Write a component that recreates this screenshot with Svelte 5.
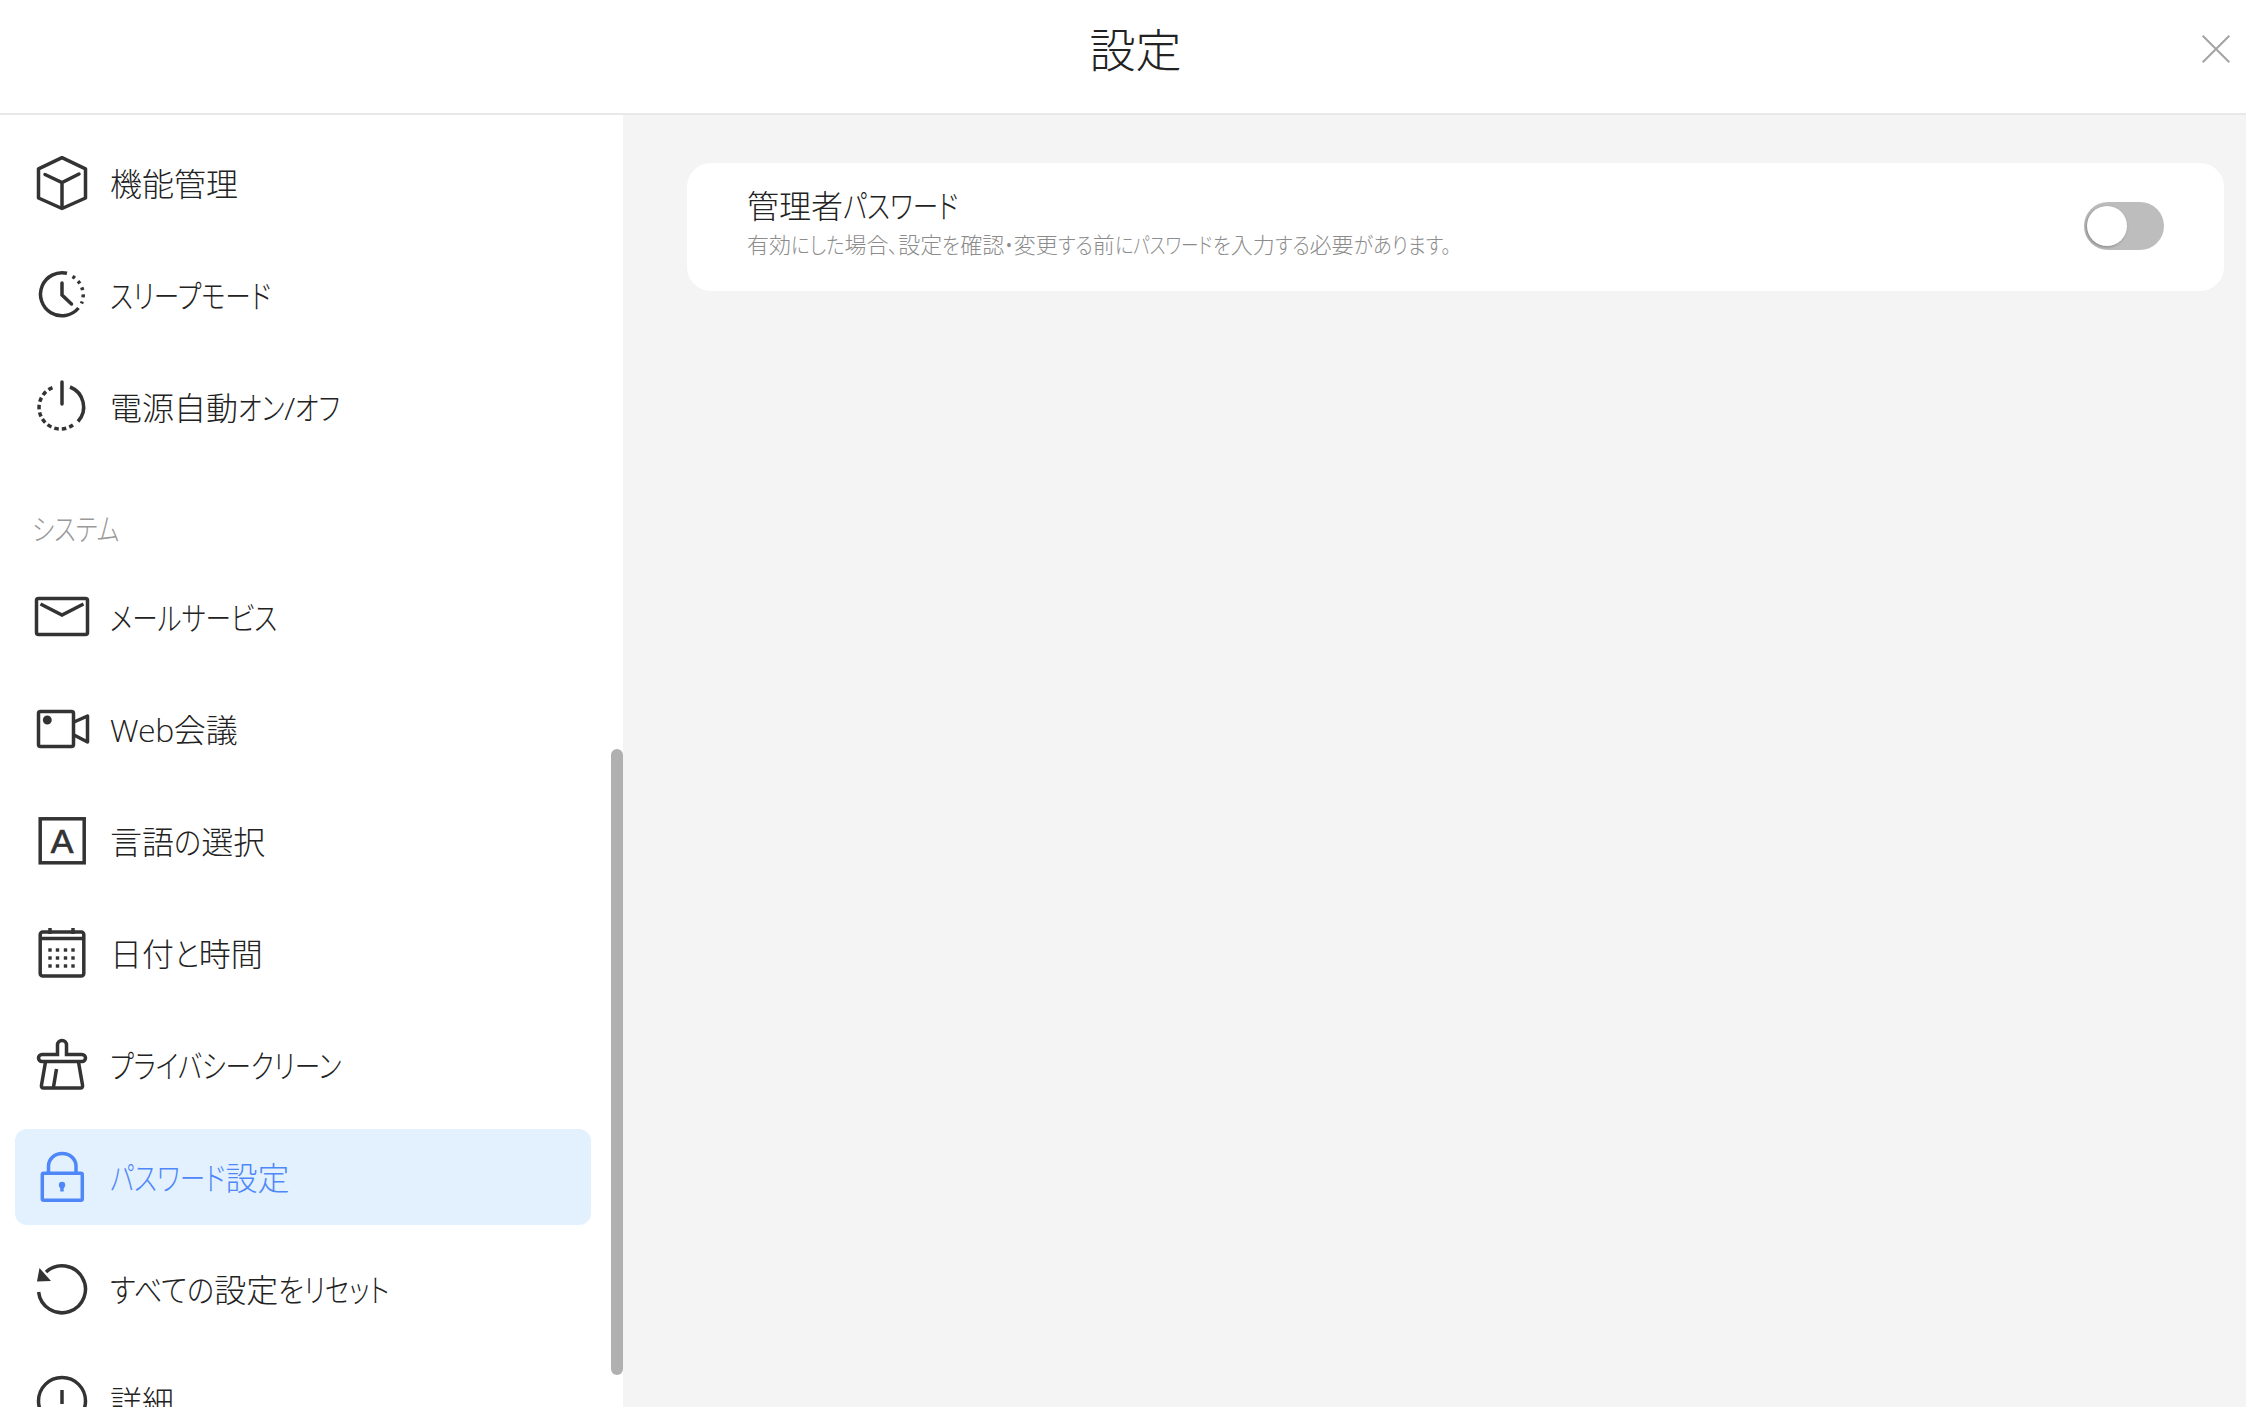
<script>
  const topRows = [
    { icon: 'cube', label: '機能管理' },
    { icon: 'clock', label: 'スリープモード' },
    { icon: 'power', label: '電源自動オン/オフ' }
  ];
  const systemRows = [
    { icon: 'mail', label: 'メールサービス' },
    { icon: 'video', label: 'Web会議' },
    { icon: 'lang', label: '言語の選択' },
    { icon: 'date', label: '日付と時間' },
    { icon: 'broom', label: 'プライバシークリーン' },
    { icon: 'lock', label: 'パスワード設定', active: true },
    { icon: 'reset', label: 'すべての設定をリセット' },
    { icon: 'info', label: '詳細' }
  ];
  const dotXs = [16, 23.5, 31.5, 39];
  const dotYs = [25, 33, 41];
  const SCALE = { kata: 0.8, hira: 0.88 };

  function runs(text) {
    const found = text.match(/[\u30a0-\u30ff]+|[\u3040-\u309f、。・]+|[A-Za-z]+|[^\u30a0-\u30ff\u3040-\u309f、。・A-Za-z]+/g) ?? [];
    return found.map((t) => {
      if (/[\u30a0-\u30ff]/.test(t[0]) && t[0] !== '・') return { t, kind: 'kata' };
      if (/[\u3040-\u309f、。・]/.test(t[0])) return { t, kind: 'hira' };
      if (/[A-Za-z]/.test(t[0])) return { t, kind: 'latin' };
      return { t, kind: 'plain' };
    });
  }

  function condense(node, kind) {
    const s = SCALE[kind];
    if (s) node.style.marginRight = `${node.offsetWidth * (s - 1)}px`;
  }
</script>

{#snippet text(str)}
  {#each runs(str) as r}<span class={r.kind} use:condense={r.kind}>{r.t}</span>{/each}
{/snippet}

{#snippet glyph(name)}
  <svg class="icon" viewBox="0 0 56 56" aria-hidden="true">
    {#if name === 'cube'}
      <path d="M28 2.7 51.5 13.8V43L28 53.5 4.5 43V13.8Z" stroke-linejoin="round" />
      <path d="M11 19.5 28 27.5 45 19M28 27.5V51" stroke-linecap="round" />
    {:else if name === 'clock'}
      <path d="M33 6.3A21.5 21.5 0 1 0 44.5 41" />
      <path d="M38.5 9.5A21.5 21.5 0 0 1 47.5 36.5" stroke-dasharray="3 4.2" />
      <path d="M28 16V28L37.5 37" stroke-linecap="round" />
    {:else if name === 'power'}
      <path d="M36 8A21.5 21.5 0 0 1 44 42.5" />
      <path d="M39 46A21.5 21.5 0 1 1 20 8" stroke-dasharray="4.5 3" />
      <path d="M28 3V25" stroke-linecap="round" />
    {:else if name === 'mail'}
      <rect x="2.5" y="9.5" width="51" height="36" rx="2" />
      <path d="M6.5 15 28 26 49.5 15" />
    {:else if name === 'video'}
      <rect x="4.5" y="10.5" width="35" height="35" rx="2" />
      <path d="M40 21 53.5 15V41L40 34" stroke-linejoin="round" />
      <circle class="solid" cx="13.3" cy="19" r="2.7" />
    {:else if name === 'lang'}
      <rect x="6.2" y="5.8" width="44" height="44" />
      <text class="letter" x="28" y="39.7" text-anchor="middle">A</text>
    {:else if name === 'date'}
      <rect x="6.2" y="7" width="43.6" height="44" rx="2.5" />
      <path d="M6.2 13.5H49.8M16 3V9M39 3V9" />
      {#each dotYs as y}
        {#each dotXs as x}
          <rect class="solid none" x={x - 1.7} y={y - 1.7} width="3.4" height="3.4" />
        {/each}
      {/each}
    {:else if name === 'broom'}
      <path d="M23.5 17.5V8a4.5 4.5 0 0 1 9 0V17.5H48a3.5 3.5 0 0 1 0 7H8a3.5 3.5 0 0 1 0-7Z" />
      <path d="M11.5 25 7.5 48q-.5 3 2 3H46.5q2.5 0 2-3L44.5 25M22.5 32 19.5 50" />
    {:else if name === 'lock'}
      <rect x="8.3" y="24.2" width="40" height="27" rx="1.5" />
      <path d="M14.5 24V17a13.75 12.5 0 0 1 27.5 0V24" />
      <circle class="solid none" cx="28" cy="36" r="3.2" />
      <path d="M28 37V42.5" />
    {:else if name === 'reset'}
      <path d="M12 11A23.5 23.5 0 1 1 4.6 31" />
      <path class="solid none" d="M5.5 7 3 20.5 17 20Z" />
    {:else if name === 'info'}
      <circle cx="28" cy="28" r="23.5" />
      <path d="M28 17V31" />
      <circle class="solid none" cx="28" cy="39" r="2.2" />
    {/if}
  </svg>
{/snippet}

{#snippet row(item)}
  <div class="row" class:active={item.active}>
    {@render glyph(item.icon)}
    <span class="label">{@render text(item.label)}</span>
  </div>
{/snippet}

<div class="page">
  <header class="head">
    <h1>設定</h1>
    <svg class="close" viewBox="0 0 28 28" aria-label="閉じる">
      <path d="M.7.7 27.3 27.3M27.3.7.7 27.3" />
    </svg>
  </header>
  <div class="body">
    <nav class="side">
      <div class="group">
        {#each topRows as item}{@render row(item)}{/each}
      </div>
      <div class="caption">{@render text('システム')}</div>
      <div class="group">
        {#each systemRows as item}{@render row(item)}{/each}
      </div>
      <div class="thumb"></div>
    </nav>
    <main class="main">
      <section class="card">
        <div class="copy">
          <div class="title">{@render text('管理者パスワード')}</div>
          <div class="desc">{@render text('有効にした場合、設定を確認・変更する前にパスワードを入力する必要があります。')}</div>
        </div>
        <div class="toggle"><div class="knob"></div></div>
      </section>
    </main>
  </div>
</div>

<style>
  :global(body) {
    margin: 0;
    background: #fff;
  }
  .page {
    width: 2246px;
    height: 1407px;
    display: flex;
    flex-direction: column;
    overflow: hidden;
    font-family: "Open Sans", "Noto Sans CJK JP", sans-serif;
    font-feature-settings: "palt";
    font-weight: 300;
    color: #222;
  }
  .kata,
  .hira {
    display: inline-block;
    transform-origin: left center;
  }
  .kata {
    transform: scaleX(0.8);
  }
  .hira {
    transform: scaleX(0.88);
  }
  .latin {
    font-weight: 350;
    letter-spacing: -0.5px;
  }
  .head {
    height: 113px;
    flex: none;
    position: relative;
    display: flex;
    align-items: center;
    justify-content: center;
    border-bottom: 2px solid #e8e8e8;
    box-sizing: content-box;
  }
  h1 {
    margin: 0 0 14px 25px;
    font-size: 46px;
    font-weight: 300;
    line-height: 1.2;
  }
  .close {
    position: absolute;
    left: 2202px;
    top: 35px;
    width: 28px;
    height: 28px;
    fill: none;
    stroke: #a3a3a3;
    stroke-width: 2;
  }
  .body {
    flex: 1;
    display: flex;
    min-height: 0;
  }
  .side {
    position: relative;
    width: 623px;
    flex: none;
    padding: 20px 32px 0 15px;
    box-sizing: border-box;
    overflow: hidden;
    background: #fff;
  }
  .group {
    display: flex;
    flex-direction: column;
    gap: 16px;
  }
  .caption {
    height: 114px;
    box-sizing: border-box;
    padding: 30px 0 0 17px;
    display: flex;
    align-items: center;
    font-size: 30px;
    color: #999;
  }
  .row {
    height: 96px;
    flex: none;
    display: flex;
    align-items: center;
    gap: 20px;
    padding-left: 19px;
    border-radius: 12px;
    font-size: 32px;
    color: #222;
    --ink: #333;
  }
  .label {
    padding-bottom: 3px;
    white-space: nowrap;
  }
  .row.active {
    background: #e3f1fe;
    color: #4f87f8;
    --ink: #4f87f8;
  }
  .icon {
    width: 56px;
    height: 56px;
    flex: none;
    fill: none;
    stroke: var(--ink);
    stroke-width: 3.5;
  }
  .icon .solid {
    fill: var(--ink);
  }
  .icon .none {
    stroke: none;
  }
  .letter {
    font-family: "Liberation Sans", sans-serif;
    font-size: 34px;
    font-weight: 400;
    fill: var(--ink);
    stroke: var(--ink);
    stroke-width: 0.7;
  }
  .thumb {
    position: absolute;
    right: 0;
    top: 634px;
    width: 12px;
    height: 626px;
    border-radius: 6px;
    background: #b0b0b0;
  }
  .main {
    flex: 1;
    min-width: 0;
    padding: 48px 22px 0 64px;
    background: #f4f4f4;
  }
  .card {
    height: 128px;
    display: flex;
    align-items: center;
    justify-content: space-between;
    padding: 0 60px;
    border-radius: 24px;
    background: #fff;
  }
  .copy {
    display: flex;
    flex-direction: column;
    gap: 6px;
    padding-bottom: 8px;
  }
  .title {
    font-size: 32px;
    line-height: 36px;
    white-space: nowrap;
  }
  .desc {
    font-size: 22px;
    line-height: 28px;
    color: #8c8c8c;
    white-space: nowrap;
  }
  .toggle {
    width: 80px;
    height: 48px;
    flex: none;
    display: flex;
    align-items: center;
    margin-bottom: 2px;
    padding-left: 3px;
    box-sizing: border-box;
    border-radius: 24px;
    background: #bdbdbd;
  }
  .knob {
    width: 40px;
    height: 40px;
    border-radius: 50%;
    background: #fff;
    box-shadow: -1px 1px 3px rgba(0, 0, 0, 0.3);
  }
</style>
